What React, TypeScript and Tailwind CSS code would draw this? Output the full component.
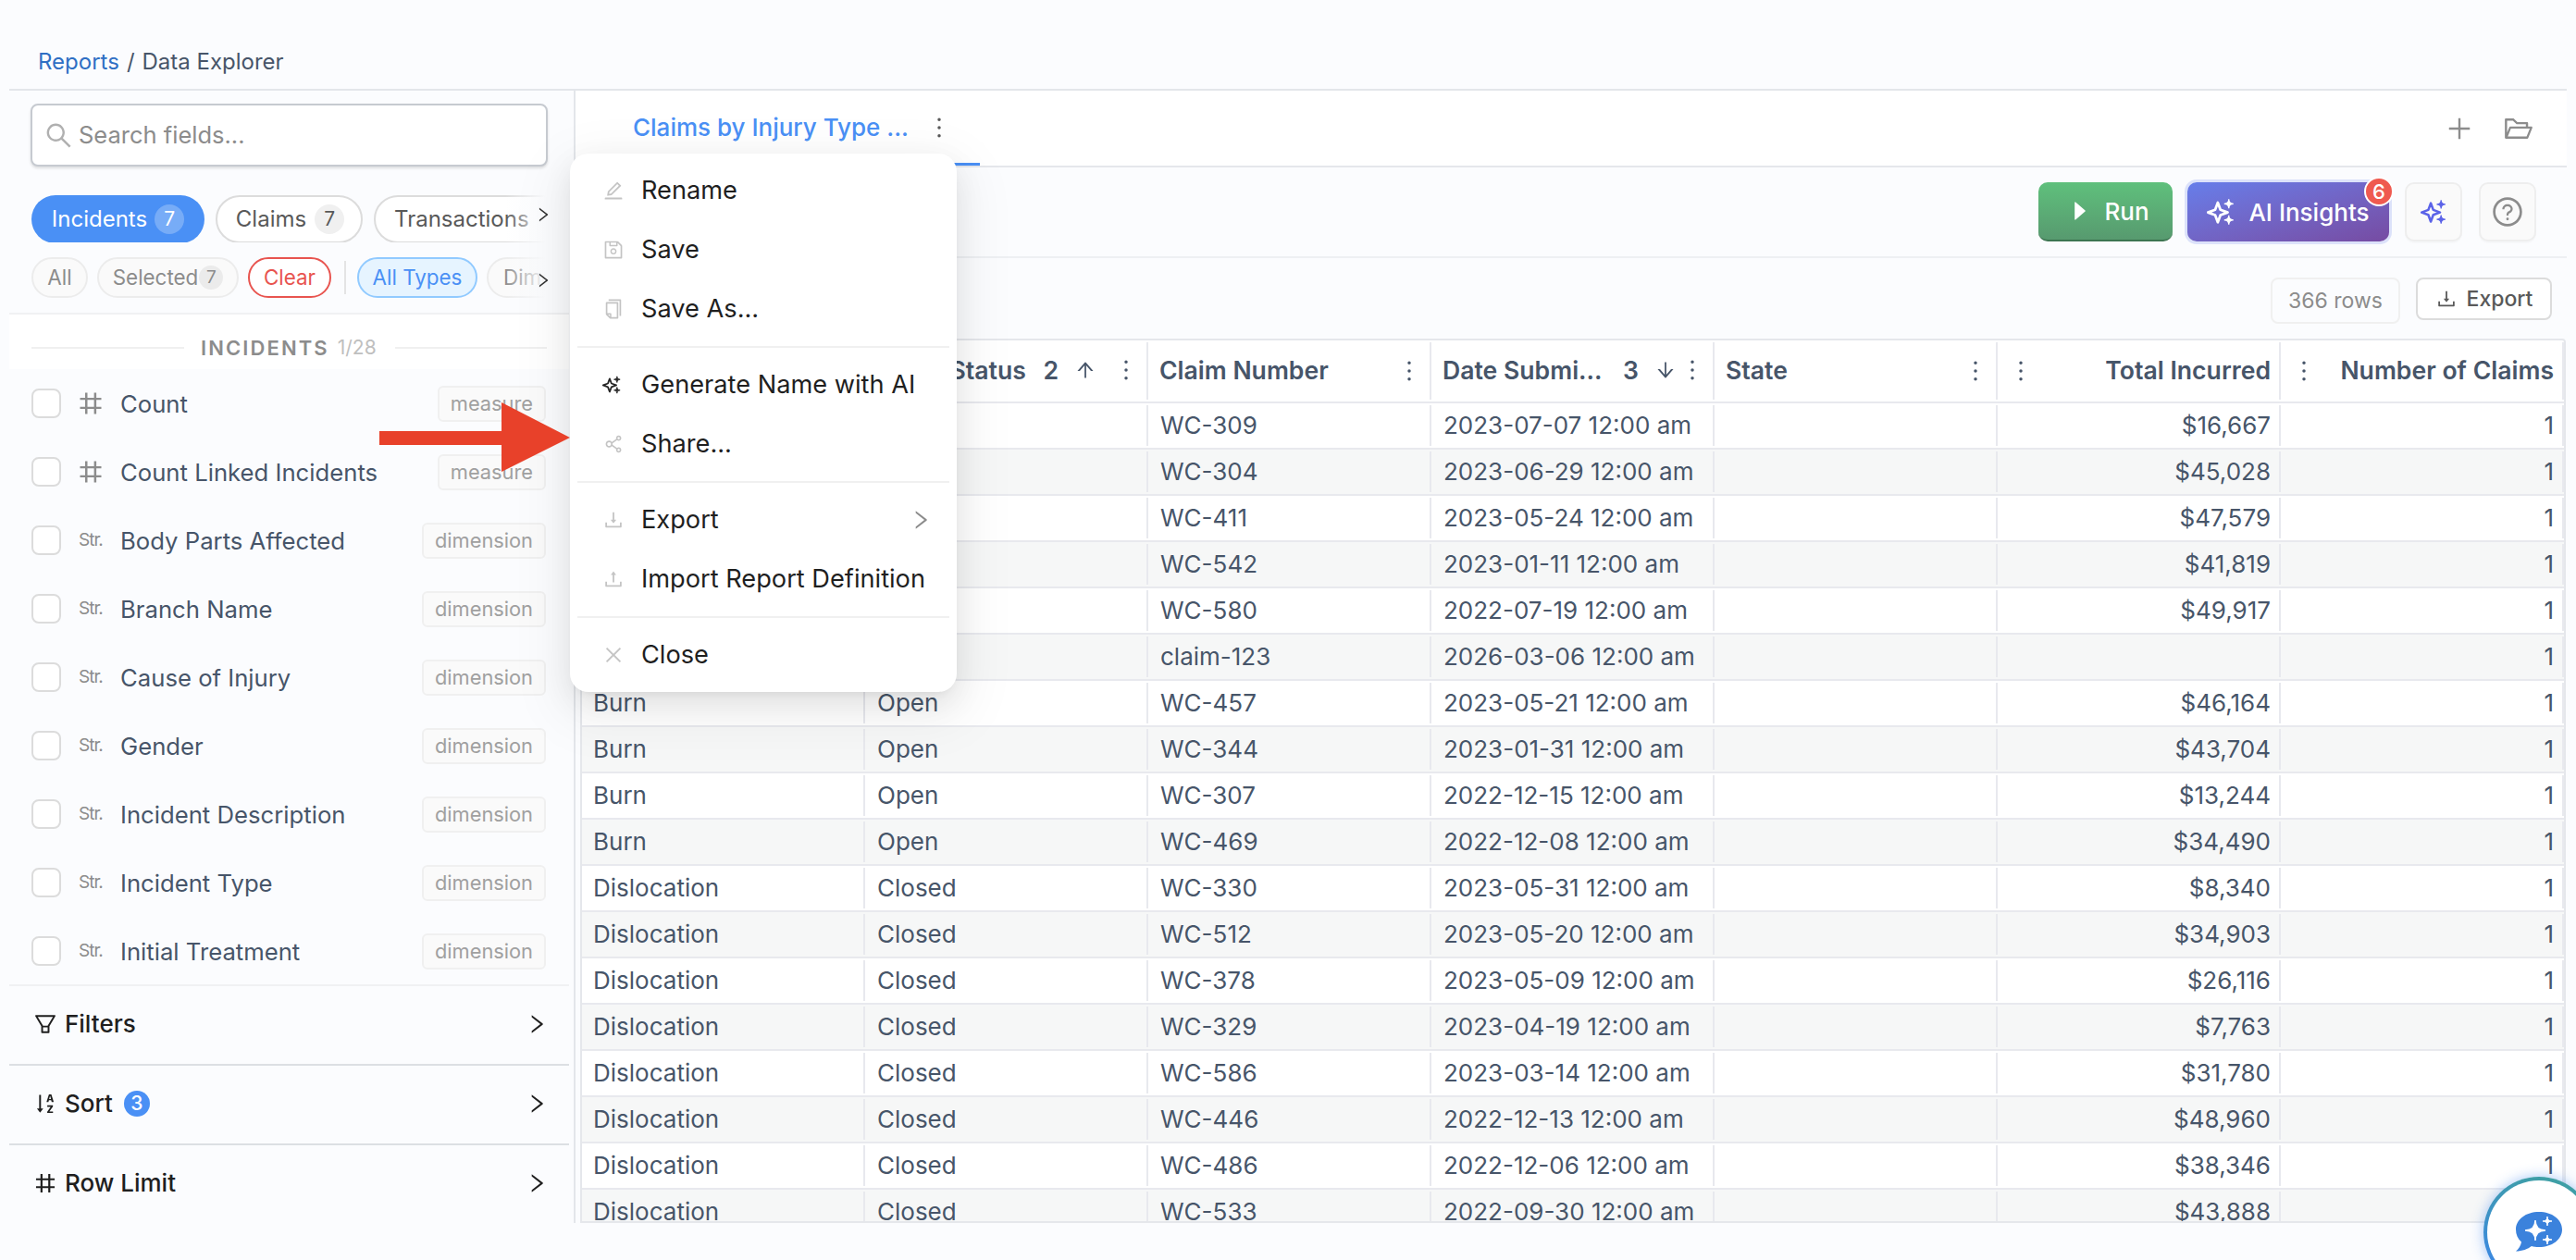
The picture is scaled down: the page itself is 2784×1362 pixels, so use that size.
import {
  AiFillCaretRight,
  AiOutlineArrowDown,
  AiOutlineArrowUp,
  AiOutlineClose,
  AiOutlineCopy,
  AiOutlineDownload,
  AiOutlineEdit,
  AiOutlineFilter,
  AiOutlineFolderOpen,
  AiOutlineMore,
  AiOutlineNumber,
  AiOutlinePlus,
  AiOutlineQuestionCircle,
  AiOutlineRight,
  AiOutlineSave,
  AiOutlineSearch,
  AiOutlineShareAlt,
  AiOutlineSortAscending,
  AiOutlineUpload,
} from "react-icons/ai";

const FIELDS = [
  { name: "Count", kind: "#", tag: "measure" },
  { name: "Count Linked Incidents", kind: "#", tag: "measure" },
  { name: "Body Parts Affected", kind: "Str.", tag: "dimension" },
  { name: "Branch Name", kind: "Str.", tag: "dimension" },
  { name: "Cause of Injury", kind: "Str.", tag: "dimension" },
  { name: "Gender", kind: "Str.", tag: "dimension" },
  { name: "Incident Description", kind: "Str.", tag: "dimension" },
  { name: "Incident Type", kind: "Str.", tag: "dimension" },
  { name: "Initial Treatment", kind: "Str.", tag: "dimension" },
];

const ROWS = [
  ["Burn", "Closed", "WC-309", "2023-07-07 12:00 am", "$16,667"],
  ["Burn", "Closed", "WC-304", "2023-06-29 12:00 am", "$45,028"],
  ["Burn", "Closed", "WC-411", "2023-05-24 12:00 am", "$47,579"],
  ["Burn", "Closed", "WC-542", "2023-01-11 12:00 am", "$41,819"],
  ["Burn", "Closed", "WC-580", "2022-07-19 12:00 am", "$49,917"],
  ["Burn", "Open", "claim-123", "2026-03-06 12:00 am", ""],
  ["Burn", "Open", "WC-457", "2023-05-21 12:00 am", "$46,164"],
  ["Burn", "Open", "WC-344", "2023-01-31 12:00 am", "$43,704"],
  ["Burn", "Open", "WC-307", "2022-12-15 12:00 am", "$13,244"],
  ["Burn", "Open", "WC-469", "2022-12-08 12:00 am", "$34,490"],
  ["Dislocation", "Closed", "WC-330", "2023-05-31 12:00 am", "$8,340"],
  ["Dislocation", "Closed", "WC-512", "2023-05-20 12:00 am", "$34,903"],
  ["Dislocation", "Closed", "WC-378", "2023-05-09 12:00 am", "$26,116"],
  ["Dislocation", "Closed", "WC-329", "2023-04-19 12:00 am", "$7,763"],
  ["Dislocation", "Closed", "WC-586", "2023-03-14 12:00 am", "$31,780"],
  ["Dislocation", "Closed", "WC-446", "2022-12-13 12:00 am", "$48,960"],
  ["Dislocation", "Closed", "WC-486", "2022-12-06 12:00 am", "$38,346"],
  ["Dislocation", "Closed", "WC-533", "2022-09-30 12:00 am", "$43,888"],
];

function star(cx: number, cy: number, r: number) {
  return `M${cx} ${cy - r}Q${cx} ${cy} ${cx + r} ${cy}Q${cx} ${cy} ${cx} ${cy + r}Q${cx} ${cy} ${cx - r} ${cy}Q${cx} ${cy} ${cx} ${cy - r}Z`;
}

// big star is an outline with a real hole, the two small ones are solid
function Sparkles({ className }: { className: string }) {
  return (
    <svg viewBox="0 0 24 24" className={className} fill="currentColor">
      <path
        d="M9.500 4L11.800 10.200L18 12.500L11.800 14.800L9.500 21L7.200 14.800L1 12.500L7.200 10.200Z"
        fill="none"
        stroke="currentColor"
        strokeWidth="2.200"
        strokeLinejoin="round"
      />
      <path d={star(19, 5, 4)} stroke="currentColor" strokeWidth="1" />
      <path d={star(19, 19, 4)} stroke="currentColor" strokeWidth="1" />
    </svg>
  );
}

function Fade() {
  return <div className="absolute right-0 top-0 bottom-0 w-[44px] bg-gradient-to-r from-transparent to-[#fbfcfe]" />;
}

function Dots({ className }: { className?: string }) {
  return <AiOutlineMore className={`-mx-[3px] h-[32px] w-[32px] shrink-0 ${className ?? ""}`} />;
}

function Sidebar() {
  return (
    <aside className="flex w-[605px] shrink-0 flex-col">
      <div className="px-[23px] pt-[14px]">
        <div className="flex h-[68px] items-center gap-[5px] rounded-[8px] border-2 border-[#c6cad0] bg-white pl-[12px] shadow-[0_2px_3px_rgba(0,0,0,0.12)]">
          <AiOutlineSearch className="h-[33px] w-[33px] text-[#b0b0b0]" />
          <span className="text-[25.500px] text-[#8c8c8c]">Search fields...</span>
        </div>
      </div>

      <div className="relative mt-[30px] ml-[24px] flex h-[52px] w-[556px] items-center gap-[12px] overflow-hidden whitespace-nowrap pt-[2px]">
        <div className="flex h-[52px] w-[187px] shrink-0 items-center justify-center gap-[8px] rounded-full bg-[#4a90f5] text-[24px] text-white">
          Incidents
          <span className="flex h-[32px] w-[32px] items-center justify-center rounded-full bg-white/25 text-[21px]">7</span>
        </div>
        <div className="flex h-[52px] w-[159px] shrink-0 items-center justify-center gap-[9px] rounded-full border-2 border-[#dcdcdc] bg-white pl-[2px] text-[24px] text-[#595959]">
          Claims
          <span className="flex h-[32px] w-[32px] items-center justify-center rounded-full bg-[#f0f0f0] text-[21px]">7</span>
        </div>
        <div className="flex h-[52px] w-[220px] shrink-0 items-center rounded-full border-2 border-[#dcdcdc] bg-white pl-[20px] text-[24px] text-[#595959]">
          Transactions
        </div>
        <Fade />
      </div>
      <AiOutlineRight className="absolute left-[577px] top-[222px] h-[20px] w-[20px] text-[#333]" />

      <div className="relative mt-[16px] ml-[24px] flex h-[44px] w-[556px] items-center gap-[10px] overflow-hidden whitespace-nowrap text-[22.400px]">
        <div className="flex h-[44px] w-[61px] shrink-0 items-center justify-center rounded-full border-2 border-[#ececec] bg-[#fafafa] text-[#8c8c8c]">All</div>
        <div className="flex h-[44px] w-[153px] shrink-0 items-center justify-center gap-[1px] rounded-full border-2 border-[#ececec] bg-[#fafafa] text-[#8c8c8c]">
          Selected
          <span className="flex h-[26px] w-[26px] items-center justify-center rounded-full bg-[#ebebeb] text-[19px]">7</span>
        </div>
        <div className="flex h-[44px] w-[90px] shrink-0 items-center justify-center rounded-full border-2 border-[#e8544f] bg-white text-[#e8544f]">Clear</div>
        <div className="ml-[4px] h-[36px] w-[2px] shrink-0 bg-[#e4e4e4]" />
        <div className="ml-[2px] flex h-[44px] w-[130px] shrink-0 items-center justify-center rounded-full border-2 border-[#91caff] bg-[#e6f4ff] text-[#4a90f5]">All Types</div>
        <div className="flex h-[44px] w-[120px] shrink-0 items-center rounded-full border-2 border-[#ececec] bg-[#fafafa] pl-[16px] text-[#8c8c8c]">Dimensions</div>
        <Fade />
      </div>
      <AiOutlineRight className="absolute left-[577px] top-[293px] h-[20px] w-[20px] text-[#333]" />

      <div className="mt-[16px] flex h-[61px] items-center border-t-2 border-[#f0f1f3] bg-white px-[24px] pt-[13px]">
        <div className="h-[2px] w-[165px] bg-[#f0f0f0]" />
        <span className="ml-[18px] text-[22px] font-semibold tracking-[2.100px] text-[#8c8c8c]">INCIDENTS</span>
        <span className="ml-[9px] text-[21px] text-[#bfbfbf]">1/28</span>
        <div className="ml-[20px] h-[2px] flex-1 bg-[#f0f0f0]" />
      </div>

      <div className="flex-1 overflow-hidden">
        {FIELDS.map((f) => (
          <div key={f.name} className="flex h-[74px] items-center pl-[24px] pr-[25px]">
            <div className="h-[32px] w-[32px] shrink-0 rounded-[8px] border-2 border-[#dcdcdc] bg-white" />
            <div className="ml-[20px] flex w-[44px] shrink-0 items-center">
              {f.kind === "#" ? (
                <AiOutlineNumber className="h-[32px] w-[32px] -ml-[4px] text-[#8c8c8c]" />
              ) : (
                <span className="-ml-[1px] text-[19px] tracking-[-1px] text-[#8c8c8c]">{f.kind}</span>
              )}
            </div>
            <span className="flex-1 pt-[2px] text-[25.700px] text-[#475569]">{f.name}</span>
            <span className="flex h-[39px] items-center rounded-[6px] border-2 border-[#f0f0f0] bg-[#fafafa] px-[12px] text-[21.800px] text-[#a0a0a0]">
              {f.tag}
            </span>
          </div>
        ))}
      </div>

      <div className="flex h-[86px] items-center border-t-2 border-[#f0f1f3] pb-[3px] pl-[25px] pr-[22px] text-[26px] font-medium text-[#1f1f1f]">
        <AiOutlineFilter className="h-[28px] w-[28px]" />
        <span className="ml-[7px] flex-1">Filters</span>
        <AiOutlineRight className="h-[26px] w-[26px]" />
      </div>
      <div className="flex h-[86px] items-center border-t-2 border-[#dcdfe3] pb-[3px] pl-[25px] pr-[22px] text-[26px] font-medium text-[#1f1f1f]">
        <AiOutlineSortAscending className="h-[28px] w-[28px]" />
        <span className="ml-[7px]">Sort</span>
        <span className="ml-[12px] flex h-[28px] w-[28px] items-center justify-center rounded-full bg-[#4a90f5] text-[21px] text-white">3</span>
        <div className="flex-1" />
        <AiOutlineRight className="h-[26px] w-[26px]" />
      </div>
      <div className="flex h-[86px] items-center border-t-2 border-[#dcdfe3] pb-[3px] pl-[25px] pr-[22px] text-[26px] font-medium text-[#1f1f1f]">
        <AiOutlineNumber className="h-[28px] w-[28px]" />
        <span className="ml-[7px] flex-1">Row Limit</span>
        <AiOutlineRight className="h-[26px] w-[26px]" />
      </div>
    </aside>
  );
}

function HeaderCell({
  label,
  order,
  dir,
  dotGap,
  right,
}: {
  label: string;
  order?: string;
  dir?: "up" | "down";
  dotGap?: string;
  right?: boolean;
}) {
  return (
    <div className="my-[2px] flex items-center overflow-hidden border-r-2 border-[#e8e9ee] pl-[12px] pr-[9px] pb-[1px] text-[26.600px] font-semibold whitespace-nowrap text-[#475569]">
      {right ? (
        <>
          <Dots className="text-[#475569]" />
          <span className="ml-auto">{label}</span>
        </>
      ) : (
        <>
          <span>{label}</span>
          <span className="ml-auto flex items-center">
            {order && <span className="mr-[17px]">{order}</span>}
            {dir === "up" && <AiOutlineArrowUp className="h-[24px] w-[24px]" />}
            {dir === "down" && <AiOutlineArrowDown className="h-[24px] w-[24px]" />}
            <span className={`flex ${dotGap ?? ""}`}>
              <Dots className="text-[#475569]" />
            </span>
          </span>
        </>
      )}
    </div>
  );
}

function DataTable() {
  return (
    <div className="ml-[5px] mr-[1px] flex flex-1 flex-col overflow-hidden rounded-t-[4px] border-2 border-[#e5e7eb] bg-white">
      <div className="grid h-[68px] shrink-0 grid-cols-[repeat(7,306px)] border-b-2 border-[#e8e9ee]">
        <HeaderCell label="Injury Type" order="1" dir="up" dotGap="ml-[19px]" />
        <HeaderCell label="Claim Status" order="2" dir="up" dotGap="ml-[19px]" />
        <HeaderCell label="Claim Number" />
        <HeaderCell label="Date Submi..." order="3" dir="down" dotGap="ml-[4px]" />
        <HeaderCell label="State" />
        <HeaderCell label="Total Incurred" right />
        <HeaderCell label="Number of Claims" right />
      </div>
      <div className="flex-1 overflow-hidden">
        {ROWS.map((r, i) => (
          <div
            key={r[2]}
            className={`grid h-[50px] grid-cols-[repeat(7,306px)] border-b-2 border-[#e8e9ee] text-[26px] text-[#475569] ${
              i % 2 === 1 ? "bg-[#f6f7f7]" : "bg-white"
            }`}
          >
            <div className="my-[2px] flex items-center border-r-2 border-[#e8e9ee] pb-[2px] pl-[12px]">{r[0]}</div>
            <div className="my-[2px] flex items-center border-r-2 border-[#e8e9ee] pb-[2px] pl-[13px]">{r[1]}</div>
            <div className="my-[2px] flex items-center border-r-2 border-[#e8e9ee] pb-[2px] pl-[13px]">{r[2]}</div>
            <div className="my-[2px] flex items-center whitespace-nowrap border-r-2 border-[#e8e9ee] pb-[2px] pl-[13px]">{r[3]}</div>
            <div className="my-[2px] border-r-2 border-[#e8e9ee]" />
            <div className="my-[2px] flex items-center justify-end border-r-2 border-[#e8e9ee] pb-[2px] pr-[9px]">{r[4]}</div>
            <div className="my-[2px] flex items-center justify-end border-r-2 border-[#e8e9ee] pb-[2px] pr-[9px]">1</div>
          </div>
        ))}
      </div>
    </div>
  );
}

function MenuItem({
  icon,
  label,
  arrow,
}: {
  icon: React.ReactNode;
  label: string;
  arrow?: boolean;
}) {
  return (
    <div className="flex h-[64px] items-center pl-[35px] pr-[28px] text-[27.200px] text-[#1f1f1f]">
      <span className="flex w-[42px] shrink-0 items-center">{icon}</span>
      <span className="flex-1 whitespace-nowrap pt-[1px]">{label}</span>
      {arrow && <AiOutlineRight className="-mr-[2px] h-[26px] w-[26px] text-[#8c8c8c]" />}
    </div>
  );
}

function TabMenu() {
  const iconCls = "h-[24px] w-[24px] text-[#c4c4c4]";
  const divider = <div className="mx-[8px] my-[8px] h-[2px] bg-[#f0f0f0]" />;
  return (
    <div className="absolute left-[616px] top-[166px] z-10 w-[418px] rounded-[20px] bg-white py-[8px] shadow-[0_12px_32px_rgba(0,0,0,0.08),0_6px_12px_-8px_rgba(0,0,0,0.12),0_18px_56px_16px_rgba(0,0,0,0.05)]">
      <MenuItem icon={<AiOutlineEdit className={iconCls} />} label="Rename" />
      <MenuItem icon={<AiOutlineSave className={iconCls} />} label="Save" />
      <MenuItem icon={<AiOutlineCopy className={iconCls} />} label="Save As..." />
      {divider}
      <MenuItem icon={<Sparkles className="h-[20px] w-[20px] text-[#262626]" />} label="Generate Name with AI" />
      <MenuItem icon={<AiOutlineShareAlt className={iconCls} />} label="Share..." />
      {divider}
      <MenuItem icon={<AiOutlineDownload className={iconCls} />} label="Export" arrow />
      <MenuItem icon={<AiOutlineUpload className={iconCls} />} label="Import Report Definition" />
      {divider}
      <MenuItem icon={<AiOutlineClose className={iconCls} />} label="Close" />
    </div>
  );
}

export default function App() {
  return (
    <div className="relative flex h-[1362px] w-[2784px] flex-col overflow-hidden bg-[#fbfcfe] font-['Inter',sans-serif]">
      <header className="mx-[10px] flex h-[98px] shrink-0 items-start border-b-2 border-[#e3e6ea] pl-[31px] pt-[52px] text-[24px] leading-[30px] text-[#475569]">
        <span className="text-[#2f6fc4]">Reports</span>
        <span className="mx-[8px]">/</span>
        <span>Data Explorer</span>
      </header>

      <div className="mx-[10px] flex h-[1224px] shrink-0">
        <Sidebar />
        <div className="ml-[5px] w-[2px] shrink-0 bg-[#e3e6ea]" />

        <main className="flex min-w-0 flex-1 flex-col">
          <div className="flex h-[83px] shrink-0 items-stretch border-b-2 border-[#e5e7eb] bg-white">
            <div className="ml-[28px] flex w-[409px] items-center border-b-[3px] border-[#4a90f5] pl-[34px] pt-[1px] text-[26px] font-medium text-[#4a90f5]">
              Claims by Injury Type ...
              <span className="ml-[20px] flex">
                <Dots className="text-[#595959]" />
              </span>
            </div>
            <div className="ml-auto mr-[35px] flex items-center gap-[31px] text-[#8c8c8c]">
              <AiOutlinePlus className="h-[32px] w-[32px]" />
              <AiOutlineFolderOpen className="h-[34px] w-[34px]" />
            </div>
          </div>

          <div className="flex h-[98px] shrink-0 items-center justify-end border-b-2 border-[#eef0f3] pr-[33px]">
            <button className="flex h-[64px] w-[145px] items-center justify-center gap-[12px] rounded-[10px] border-b-2 border-[#3d7551] bg-gradient-to-b from-[#5fc07c] to-[#579a6f] pl-[6px] text-[26px] font-medium text-white">
              <AiFillCaretRight className="h-[28px] w-[28px]" />
              Run
            </button>
            <div className="relative ml-[16px] flex h-[64px] w-[218px] items-center justify-center gap-[15px] rounded-[10px] bg-gradient-to-br from-[#667eea] to-[#764ba2] text-[26px] font-medium text-white shadow-[0_0_0_3px_rgba(102,126,234,0.2)]">
              <Sparkles className="h-[30px] w-[30px]" />
              AI Insights
              <span className="absolute right-[-5px] top-[-6px] flex h-[32px] w-[32px] items-center justify-center rounded-full border-2 border-white bg-[#ef5a50] text-[22px]">6</span>
            </div>
            <div className="ml-[17px] flex h-[64px] w-[62px] items-center justify-center rounded-[10px] border-2 border-[#eeeeee] bg-[#fafafa] shadow-[0_2px_0_rgba(0,0,0,0.02)]">
              <Sparkles className="h-[28px] w-[28px] text-[#5b63e8]" />
            </div>
            <div className="ml-[18px] flex h-[64px] w-[62px] items-center justify-center rounded-[10px] border-2 border-[#eeeeee] bg-[#fafafa] shadow-[0_2px_0_rgba(0,0,0,0.02)]">
              <AiOutlineQuestionCircle className="h-[36px] w-[36px] text-[#8c8c8c]" />
            </div>
          </div>

          <div className="flex h-[87px] shrink-0 items-start justify-end gap-[17px] pr-[16px] pt-[21px]">
            <div className="flex h-[50px] w-[140px] items-center justify-center rounded-[8px] border-2 border-[#f0f0f0] text-[23px] text-[#8c8c8c]">366 rows</div>
            <div className="flex h-[46px] w-[147px] items-center justify-center gap-[10px] rounded-[8px] border-2 border-[#dcdcdc] bg-white text-[23px] font-medium text-[#595959]">
              <AiOutlineDownload className="h-[24px] w-[24px]" />
              Export
            </div>
          </div>

          <DataTable />
        </main>
      </div>

      <TabMenu />

      {/* annotation arrow */}
      <svg className="absolute left-[410px] top-[435px] z-20" width="206" height="75" viewBox="0 0 206 75">
        <path d="M0 31H132V0L206 38L132 75V46H0Z" fill="#e8412a" />
      </svg>

      {/* chat launcher */}
      <div className="absolute left-[2684px] top-[1272px] z-20 flex h-[120px] w-[120px] rounded-full bg-[linear-gradient(200deg,#3fa39b,#3b82f0)] p-[4px] shadow-[0_0_14px_rgba(59,130,240,0.45)]">
        <div className="flex h-full w-full items-start justify-center rounded-full bg-white pt-[32px]">
          <svg viewBox="0 0 52 46" className="h-[46px] w-[52px]">
            <path d="M26 2C40 2 51 10 51 21C51 32 40 40 26 40C23 40 20 39.6 18 39C14 42 8 44.5 1 44.5C4 42 6.5 38 7 34.5C3 31 1 26.5 1 21C1 10 12 2 26 2Z" fill="#3b82dc" />
            <path d={star(22, 22, 11)} fill="#fff" stroke="#fff" strokeWidth="1.5" />
            <path d={star(35, 12, 5)} fill="#fff" stroke="#fff" strokeWidth="1" />
            <path d={star(35, 32, 5)} fill="#fff" stroke="#fff" strokeWidth="1" />
          </svg>
        </div>
      </div>
    </div>
  );
}
